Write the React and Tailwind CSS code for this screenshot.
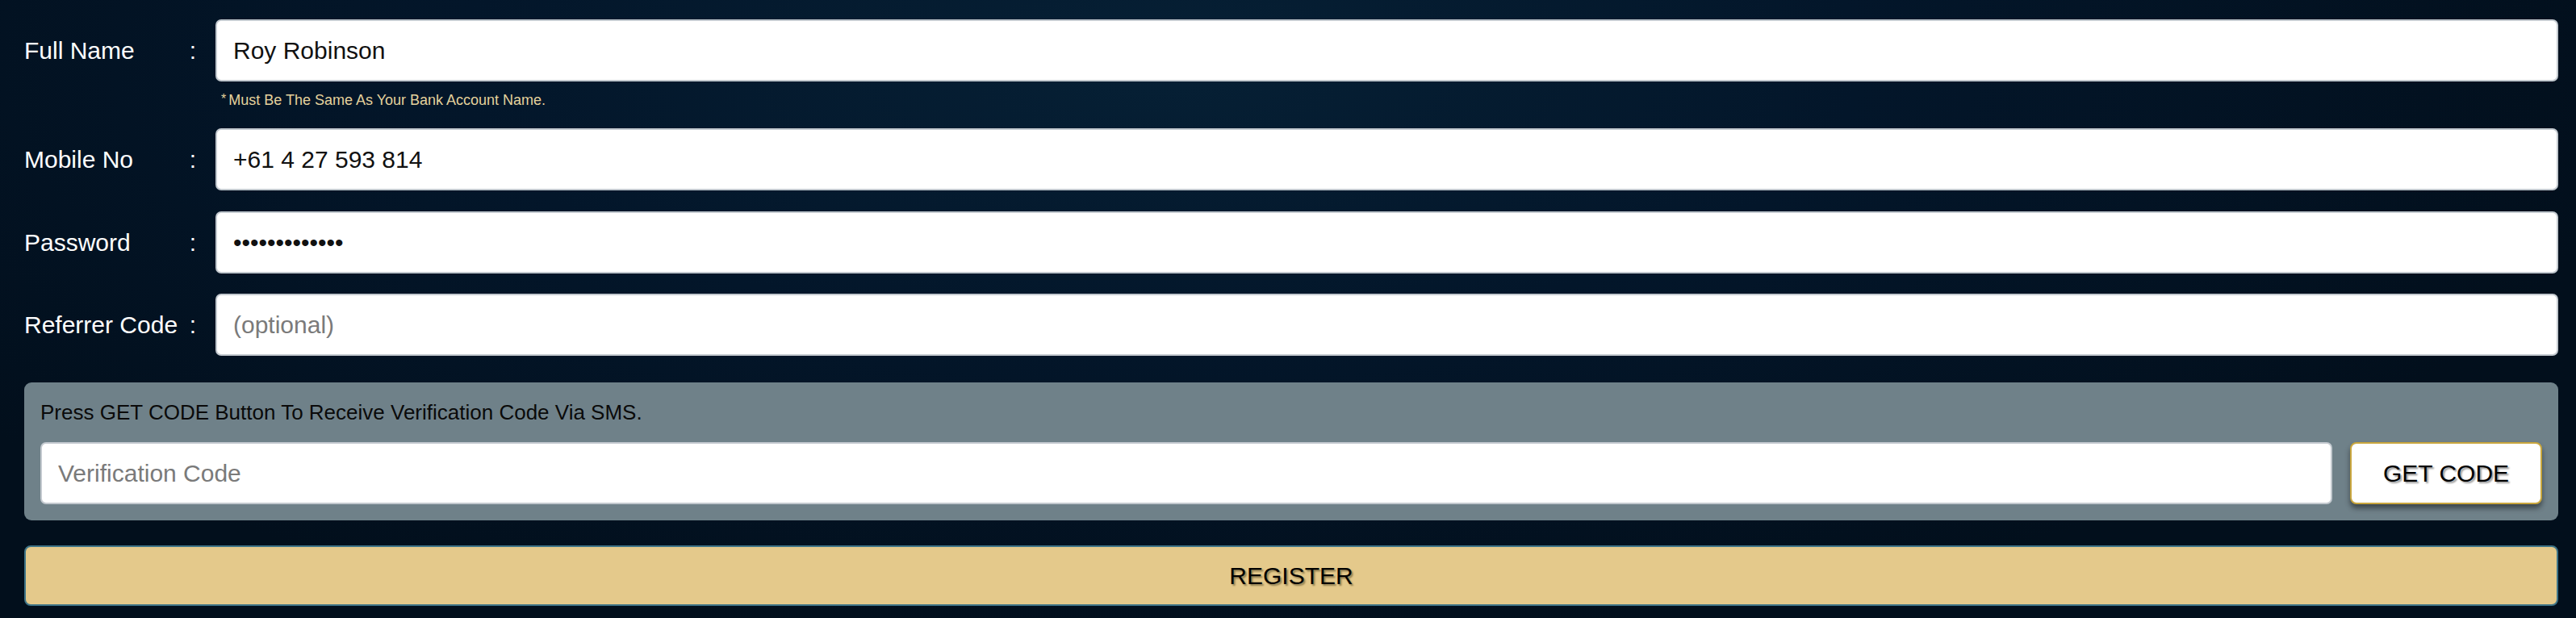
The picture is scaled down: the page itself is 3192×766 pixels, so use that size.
import React from "react";

const font = { fontFamily: '"Liberation Sans", Arial, sans-serif' };

function Row({ label, children, className = "" }) {
  return (
    <div className={`flex items-center ${className}`}>
      <span className="w-[199px] shrink-0 text-[30px] leading-none text-white">{label}</span>
      <span className="w-[20px] shrink-0 text-center text-[30px] leading-none text-white">:</span>
      <div className="ml-[18px] flex-1">{children}</div>
    </div>
  );
}

const inputCls =
  "block h-[77px] w-full rounded-[7px] border-2 border-[#c3c9cf] bg-white px-[20px] text-[30px] text-[#111] outline-none placeholder:text-[#7a7a7a]";

export default function App() {
  return (
    <div
      style={font}
      className="min-h-[766px] w-full bg-[#021120] bg-[radial-gradient(ellipse_at_45%_10%,#062035_0%,#03162a_35%,#020f1c_75%)] pl-[30px] pr-[22px] pt-[24px]"
    >
      <form className="flex flex-col" onSubmit={(e) => e.preventDefault()}>
        <Row label="Full Name">
          <input className={inputCls} defaultValue="Roy Robinson" readOnly />
        </Row>
        <div className="mt-[12px] h-[20px] pl-[244px] text-[18px] leading-[20px] text-[#e4d29c]">
          <span className="mr-[3px] align-[2px] text-[16px]">*</span>Must Be The Same As Your Bank Account Name.
        </div>

        <Row label="Mobile No" className="mt-[26px]">
          <input className={inputCls} defaultValue="+61 4 27 593 814" readOnly />
        </Row>

        <Row label="Password" className="mt-[26px]">
          <input className={inputCls} type="password" defaultValue="rob1nson2024!" readOnly />
        </Row>

        <Row label="Referrer Code" className="mt-[25px]">
          <input className={inputCls} placeholder="(optional)" readOnly />
        </Row>

        <div className="mt-[33px] rounded-[9px] bg-[#6f8189] px-[20px] pb-[20px] pt-[22px]">
          <p className="text-[26px] leading-[30px] text-[#0a0a0a]">
            Press GET CODE Button To Receive Verification Code Via SMS.
          </p>
          <div className="mt-[22px] flex items-center gap-[22px]">
            <input className={inputCls} placeholder="Verification Code" readOnly />
            <button
              type="button"
              className="h-[77px] w-[238px] shrink-0 rounded-[8px] border-2 border-[#c9a63d] bg-white text-[30px] text-black shadow-[0_5px_6px_rgba(0,0,0,0.45)] [text-shadow:2px_2px_2px_#9a9a9a]"
            >
              GET CODE
            </button>
          </div>
        </div>

        <button
          type="submit"
          className="mt-[31px] h-[75px] w-full rounded-[8px] border-2 border-[#3e7488] bg-[#e4c98b] text-[30px] text-black [text-shadow:2px_2px_2px_#8f7d4f]"
        >
          REGISTER
        </button>
      </form>
    </div>
  );
}
